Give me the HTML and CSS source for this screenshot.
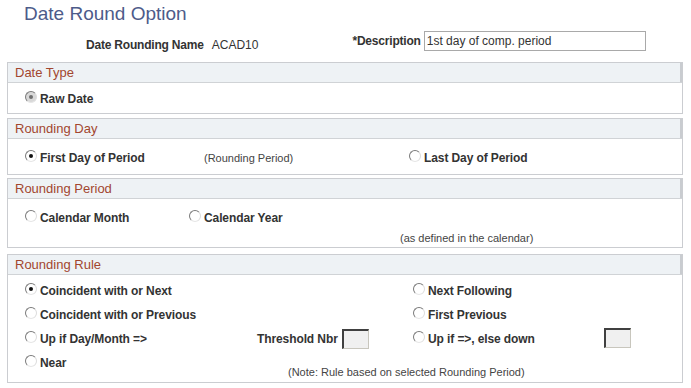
FILE: index.html
```html
<!DOCTYPE html>
<html>
<head>
<meta charset="utf-8">
<link rel="stylesheet" href="styles.css">
</head>
<body>
<div class="page">
  <h1 class="title">Date Round Option</h1>
  <div class="keyrow">
    <span class="lbl name-lbl">Date Rounding Name</span>
    <span class="val">ACAD10</span>
    <span class="lbl desc-lbl">*Description</span>
    <span class="textbox">1st day of comp. period</span>
  </div>

  <section class="box box-type">
    <div class="box-head">Date Type</div>
    <div class="box-body">
      <div class="row">
        <label class="opt"><span class="radio disabled checked"></span>Raw Date</label>
      </div>
    </div>
  </section>

  <section class="box box-day">
    <div class="box-head">Rounding Day</div>
    <div class="box-body">
      <div class="row day-row">
        <label class="opt"><span class="radio checked"></span>First Day of Period</label>
        <span class="note">(Rounding Period)</span>
        <label class="opt"><span class="radio"></span>Last Day of Period</label>
      </div>
    </div>
  </section>

  <section class="box box-period">
    <div class="box-head">Rounding Period</div>
    <div class="box-body">
      <div class="row period-row">
        <label class="opt"><span class="radio"></span>Calendar Month</label>
        <label class="opt"><span class="radio"></span>Calendar Year</label>
      </div>
      <div class="note period-note">(as defined in the calendar)</div>
    </div>
  </section>

  <section class="box box-rule">
    <div class="box-head">Rounding Rule</div>
    <div class="box-body">
      <div class="rule-grid">
        <label class="opt c1"><span class="radio checked"></span>Coincident with or Next</label>
        <label class="opt c3"><span class="radio"></span>Next Following</label>

        <label class="opt c1"><span class="radio"></span>Coincident with or Previous</label>
        <label class="opt c3"><span class="radio"></span>First Previous</label>

        <label class="opt c1"><span class="radio"></span>Up if Day/Month =&gt;</label>
        <span class="threshold c2"><span class="thr-lbl">Threshold Nbr</span><span class="smallbox"></span></span>
        <label class="opt c3"><span class="radio"></span>Up if =&gt;, else down</label>
        <span class="c4"><span class="smallbox"></span></span>

        <label class="opt c1"><span class="radio"></span>Near</label>
        <span class="note rule-note">(Note: Rule based on selected Rounding Period)</span>
      </div>
    </div>
  </section>
</div>
</body>
</html>
```

FILE: styles.css
```css
html, body {
  margin: 0;
  padding: 0;
  background: #ffffff;
}
body {
  font-family: "Liberation Sans", Arial, sans-serif;
  font-size: 12px;
  color: #333333;
}
.page {
  padding: 0 8px 0 7px;
  width: 676px;
}
.title {
  margin: 0;
  padding: 3px 0 0 17px;
  height: 25px;
  font-size: 19px;
  font-weight: normal;
  color: #4d5b8a;
  line-height: 22px;
}
.keyrow {
  display: flex;
  align-items: flex-start;
  height: 22px;
  margin-top: 3px;
}
.lbl {
  font-weight: bold;
  color: #333;
  padding-top: 7px;
  line-height: 14px;
}
.name-lbl {
  margin-left: 79px;
  letter-spacing: -0.2px;
}
.val {
  margin-left: 8px;
  color: #333;
  padding-top: 7px;
  line-height: 14px;
}
.desc-lbl {
  margin-left: 94px;
  letter-spacing: -0.2px;
  padding-top: 3px;
}
.textbox {
  box-sizing: border-box;
  margin-left: 3px;
  width: 222px;
  height: 20px;
  border: 1px solid #a9a9a9;
  padding: 2px 1px 0 2px;
  line-height: 15px;
  color: #333;
  background: #fff;
}
.box {
  border: 1px solid #cbcdd1;
  margin-top: 5px;
}
.box-type { margin-top: 9px; }
.box-day { margin-top: 4px; }
.box-period { margin-top: 3px; }
.box-rule { margin-top: 6px; }
.box-head {
  height: 19px;
  line-height: 19px;
  background: #eef2f5;
  border-bottom: 1px solid #d0d3d6;
  color: #a2462f;
  font-size: 13px;
  padding-left: 7px;
  box-shadow: inset -2px 0 0 #c9ccd0;
}
.box-body {
  position: relative;
}
.box-type .box-body { height: 30px; padding-top: 0; }
.box-day .box-body { height: 35px; }
.box-period .box-body { height: 48px; }
.box-rule .box-body { height: 107px; }

.row {
  display: flex;
  align-items: center;
  padding-left: 17px;
  height: 16px;
}
.box-type .row { padding-top: 8px; }
.box-day .row { padding-top: 11px; }
.box-period .row { padding-top: 11px; }

.opt {
  display: inline-flex;
  align-items: center;
  font-weight: bold;
  color: #333;
  white-space: nowrap;
  letter-spacing: -0.1px;
}
.radio {
  box-sizing: border-box;
  display: inline-block;
  width: 12px;
  height: 12px;
  border-radius: 50%;
  border: 1px solid;
  border-color: #7a7a7a #dcdcdc #e6e6e6 #7a7a7a;
  background: #ffffff;
  margin-right: 3px;
  margin-top: -4px;
  position: relative;
  flex: none;
}
.radio.checked::after {
  content: "";
  position: absolute;
  left: 3px;
  top: 3px;
  width: 4px;
  height: 4px;
  border-radius: 50%;
  background: #111;
}
.radio.disabled {
  background: #d8d8d8;
}
.radio.disabled.checked::after {
  background: #6e6e6e;
}
.note {
  font-size: 11px;
  color: #444;
  white-space: nowrap;
}
.day-row .opt:first-child { width: 179px; }
.day-row .note { width: 205px; }
.period-row .opt:first-child { width: 164px; }
.period-note {
  padding-left: 392px;
  margin-top: 6px;
}

.rule-grid {
  display: grid;
  grid-template-columns: 232px 156px 191px auto;
  grid-auto-rows: 24px;
  padding-left: 17px;
  padding-top: 4px;
  align-items: center;
}
.c1 { grid-column: 1; }
.c2 { grid-column: 2; }
.c3 { grid-column: 3; }
.c4 { grid-column: 4; }
.threshold {
  display: inline-flex;
  align-items: center;
}
.thr-lbl {
  font-weight: bold;
  color: #333;
  margin-right: 4px;
  letter-spacing: -0.1px;
}
.smallbox {
  box-sizing: border-box;
  display: inline-block;
  width: 27px;
  height: 20px;
  background: #f0f0f0;
  border-style: solid;
  border-width: 2px 1px 1px 2px;
  border-color: #404040 #c8c6bd #c8c6bd #404040;
}
.rule-note {
  grid-column: 2 / 4;
  padding-left: 31px;
  align-self: end;
  margin-bottom: -3px;
}
```
